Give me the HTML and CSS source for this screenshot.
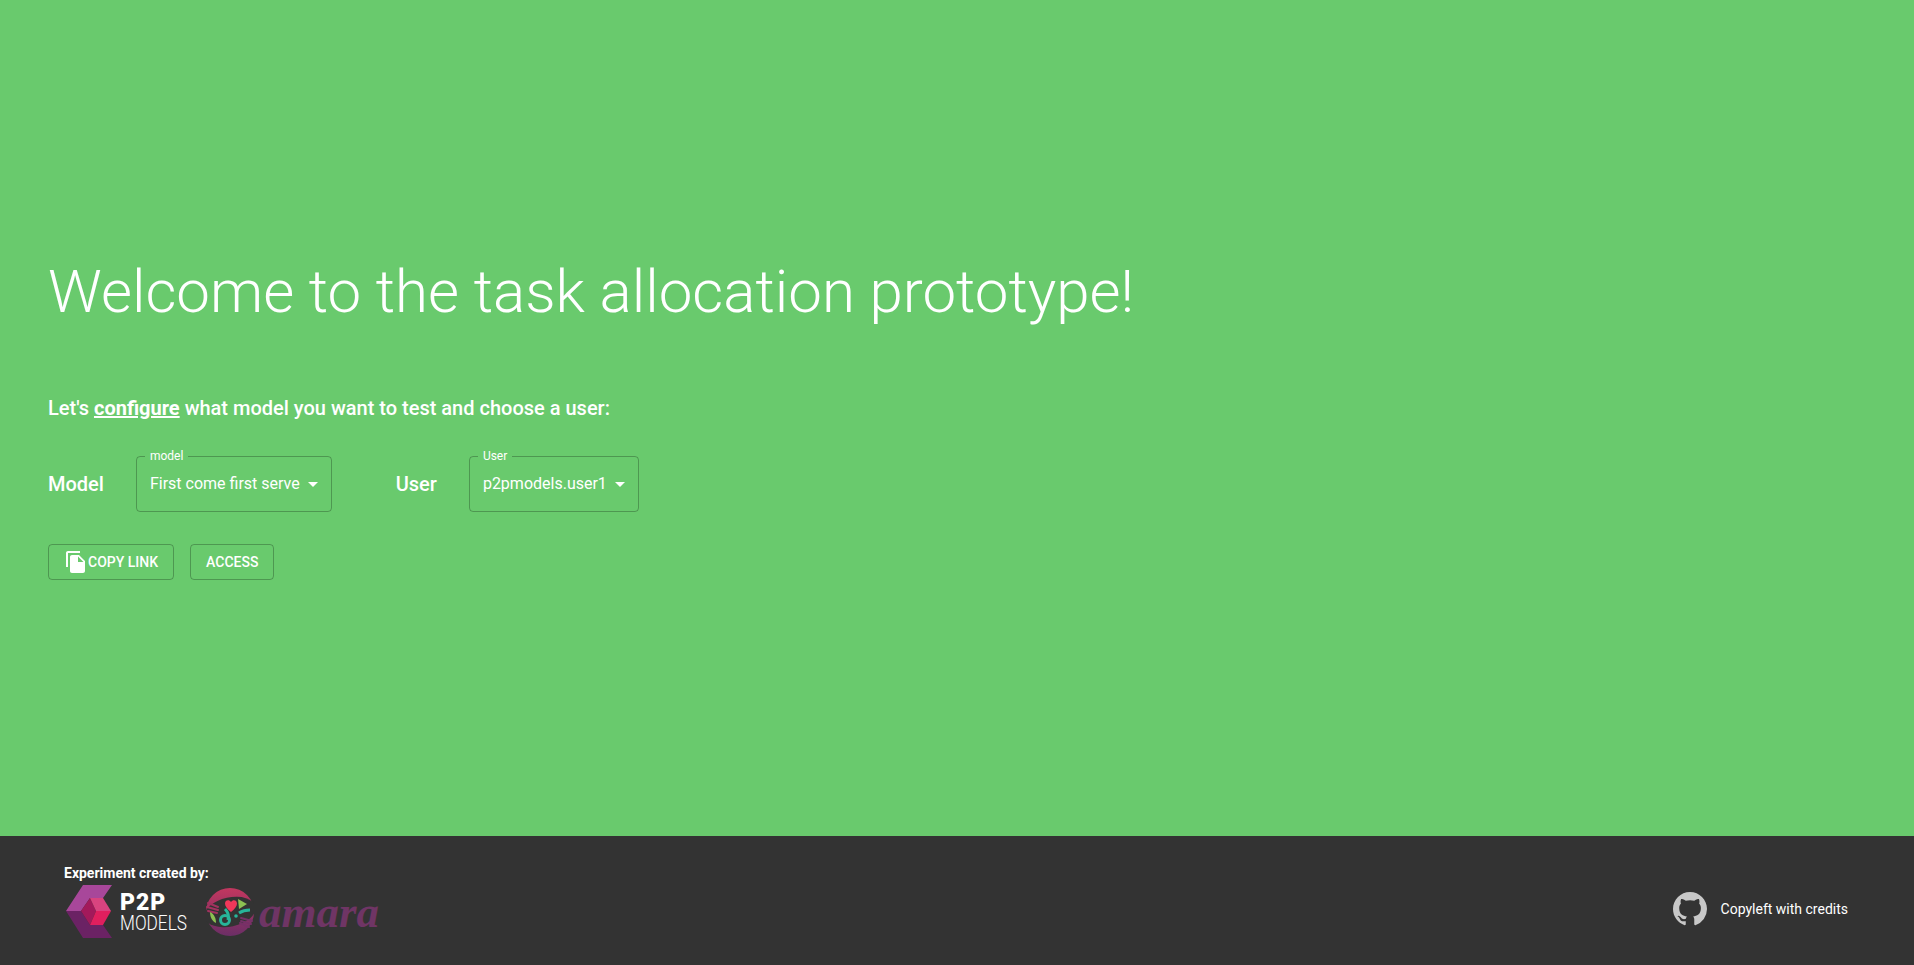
FILE: index.html
```html
<!DOCTYPE html>
<html lang="en">
<head>
    <meta charset="UTF-8">
    <meta name="viewport" content="width=device-width, initial-scale=1.0">
    <title>Task allocation prototype</title>
    <link rel="stylesheet" href="styles.css">
</head>
<body>
    <main class="welcome">
        <h1>Welcome to the task allocation prototype!</h1>
        <p class="intro">Let's <a href="#">configure</a> what model you want to test and choose a user:</p>

        <div class="selectors">
            <span class="sel-title">Model</span>
            <div class="select select-model">
                <span class="select-label">model</span>
                <span>First come first serve</span>
                <svg class="arrow" viewBox="0 0 24 24"><path d="M7 10l5 5 5-5z"/></svg>
            </div>
            <span class="sel-title user-title">User</span>
            <div class="select select-user">
                <span class="select-label">User</span>
                <span>p2pmodels.user1</span>
                <svg class="arrow" viewBox="0 0 24 24"><path d="M7 10l5 5 5-5z"/></svg>
            </div>
        </div>

        <div class="actions">
            <button class="btn btn-copy">
                <svg class="copy-icon" viewBox="0 0 24 24"><path d="M16 1H4c-1.1 0-2 .9-2 2v14h2V3h12V1zm-1 4l6 6v10c0 1.1-.9 2-2 2H7.99C6.89 23 6 22.1 6 21l.01-14c0-1.1.89-2 1.99-2h7zm-1 7h5.5L14 6.5V12z"/></svg>
                Copy link
            </button>
            <button class="btn">Access</button>
        </div>
    </main>

    <footer class="footer">
        <div class="credits">
            <strong class="credits-title">Experiment created by:</strong>
            <div class="logos">
                <div class="logo-p2p">
                    <svg class="cube" viewBox="0 0 46 54">
                        <polygon fill="#a8479a" points="17,0 46,0 37,13 24,13 15,26 0,26"/>
                        <polygon fill="#6b2264" points="0,26 15,26 24,40 37,40 46,53 17,53"/>
                        <polygon fill="#a3195b" points="24,13 30,26 24,40 15,26"/>
                        <polygon fill="#d9437f" points="24,13 37,13 45,26 30,26"/>
                        <polygon fill="#e01f5e" points="30,26 45,26 37,40 24,40"/>
                    </svg>
                    <div class="p2p-text">
                        <span class="p2p-top">P2P</span>
                        <span class="p2p-bottom">MODELS</span>
                    </div>
                </div>
                <div class="logo-amara">
                    <svg class="amara-mark" viewBox="0 0 48 48">
                        <defs>
                            <linearGradient id="amaraGrad" x1="0" y1="0" x2="0" y2="1">
                                <stop offset="0" stop-color="#c2375f"/>
                                <stop offset="1" stop-color="#6b2e66"/>
                            </linearGradient>
                        </defs>
                        <circle cx="24" cy="24" r="24" fill="url(#amaraGrad)"/>
                        <ellipse cx="24" cy="24" rx="26" ry="14.500" transform="rotate(-12 24 24)" fill="#333"/>
                        <g fill="none" stroke-width="2" stroke-linecap="round">
                            <path stroke="#a3325f" d="M2 15l10 4M1 19l11 3M2 23l9 2"/>
                            <path stroke="#753067" d="M46 33l-11-3M45 36l-10-3M43 39l-9-4"/>
                        </g>
                        <path fill="#f0385a" d="M25 24c-4-3-6-6-6-8.500 0-3.500 4-4.500 6-1.500 2-3 6-2 6 1.500 0 2.500-2 5.500-6 8.500z"/>
                        <polygon fill="#8cc152" points="32,11 41,16 33,21"/>
                        <path fill="#8cc152" d="M4 24c4 2 6 6 6 11-4-2-6-6-6-11z"/>
                        <circle cx="19" cy="32" r="4.500" fill="none" stroke="#27b59a" stroke-width="3"/>
                        <path fill="none" stroke="#27b59a" stroke-width="3" d="M19 21c3 3 4 7 3 11"/>
                        <path fill="none" stroke="#27b59a" stroke-width="3" d="M33 25c3-2 7-3 11-3"/>
                        <circle cx="30" cy="28" r="1.800" fill="#27b59a"/>
                    </svg>
                    <span class="amara-text">amara</span>
                </div>
            </div>
        </div>

        <div class="copyleft">
            <svg class="github" viewBox="0 0 16 16"><path d="M8 0C3.58 0 0 3.58 0 8c0 3.54 2.29 6.53 5.47 7.59.4.07.55-.17.55-.38 0-.19-.01-.82-.01-1.49-2.01.37-2.53-.49-2.69-.94-.09-.23-.48-.94-.82-1.13-.28-.15-.68-.52-.01-.53.63-.01 1.08.58 1.23.82.72 1.21 1.87.87 2.33.66.07-.52.28-.87.51-1.07-1.78-.2-3.64-.89-3.64-3.95 0-.87.31-1.59.82-2.15-.08-.2-.36-1.02.08-2.12 0 0 .67-.21 2.2.82.64-.18 1.32-.27 2-.27s1.36.09 2 .27c1.53-1.04 2.2-.82 2.2-.82.44 1.1.16 1.92.08 2.12.51.56.82 1.27.82 2.15 0 3.07-1.87 3.75-3.65 3.95.29.25.54.73.54 1.48 0 1.07-.01 1.93-.01 2.2 0 .21.15.46.55.38A8.01 8.01 0 0 0 16 8c0-4.42-3.58-8-8-8z"/></svg>
            <span>Copyleft with credits</span>
        </div>
    </footer>
</body>
</html>
```

FILE: styles.css
```css
* {
    box-sizing: border-box;
}
html, body {
    height: 100%;
}
body {
    margin: 0;
    display: flex;
    flex-direction: column;
    font-family: Roboto, sans-serif;
    color: #fff;
    background: #69ca6d;
}
.welcome {
    flex: 1;
    display: flex;
    flex-direction: column;
    justify-content: center;
    align-items: flex-start;
    padding: 0 48px;
}
h1 {
    margin: 0 0 64px;
    font-size: 60px;
    font-weight: 300;
    line-height: 72px;
}
.intro {
    margin: 0 0 32px;
    font-size: 20px;
    font-weight: 500;
    line-height: 32px;
}
.intro a {
    color: #fff;
    font-weight: 700;
}
.selectors {
    display: flex;
    align-items: center;
    gap: 32px;
    margin-bottom: 32px;
}
.sel-title {
    font-size: 20px;
    font-weight: 500;
}
.user-title {
    margin-left: 32px;
}
.select {
    position: relative;
    display: flex;
    align-items: center;
    height: 56px;
    padding: 0 31px 2px 13px;
    font-size: 16px;
    border: 1px solid rgba(0, 0, 0, .25);
    border-radius: 4px;
}
.select-label {
    position: absolute;
    top: -8px;
    left: 8px;
    padding: 0 5px;
    font-size: 12px;
    line-height: 14px;
    background: #69ca6d;
}
.arrow {
    position: absolute;
    right: 6px;
    top: 15px;
    width: 24px;
    height: 24px;
    fill: #fff;
}
.actions {
    display: flex;
    gap: 16px;
}
.btn {
    display: flex;
    align-items: center;
    height: 36px;
    padding: 0 15px;
    font-family: inherit;
    font-size: 14px;
    font-weight: 500;
    text-transform: uppercase;
    color: #fff;
    background: none;
    border: 1px solid rgba(0, 0, 0, .25);
    border-radius: 4px;
}
.copy-icon {
    width: 24px;
    height: 24px;
    fill: #fff;
}
.footer {
    display: flex;
    justify-content: space-between;
    align-items: center;
    height: 129px;
    padding: 0 66px 0 64px;
    background: #333;
}
.credits-title {
    display: block;
    font-size: 14px;
    line-height: 20px;
}
.logos {
    display: flex;
    align-items: center;
    gap: 20px;
    margin-top: 2px;
}
.logo-p2p {
    display: flex;
    align-items: center;
    gap: 8px;
    margin-left: 2px;
}
.cube {
    width: 46px;
    height: 54px;
}
.p2p-text {
    display: flex;
    flex-direction: column;
    width: 66px;
    line-height: 1;
}
.p2p-top {
    font-size: 23px;
    font-weight: 900;
    line-height: 21px;
    letter-spacing: 1px;
    padding-top: 1px;
}
.p2p-bottom {
    font-size: 21px;
    font-weight: 300;
    line-height: 20px;
    transform: scaleX(.82);
    transform-origin: left;
}
.logo-amara {
    display: flex;
    align-items: center;
    gap: 5px;
}
.amara-mark {
    width: 48px;
    height: 48px;
}
.amara-text {
    font-family: "Liberation Serif", serif;
    font-size: 45px;
    font-style: italic;
    font-weight: 700;
    line-height: 48px;
    color: #6f3565;
}
.copyleft {
    align-self: flex-end;
    display: flex;
    align-items: center;
    gap: 14px;
    margin-bottom: 39px;
    font-size: 14px;
}
.github {
    width: 34px;
    height: 34px;
    fill: #c8c8c8;
}
```
